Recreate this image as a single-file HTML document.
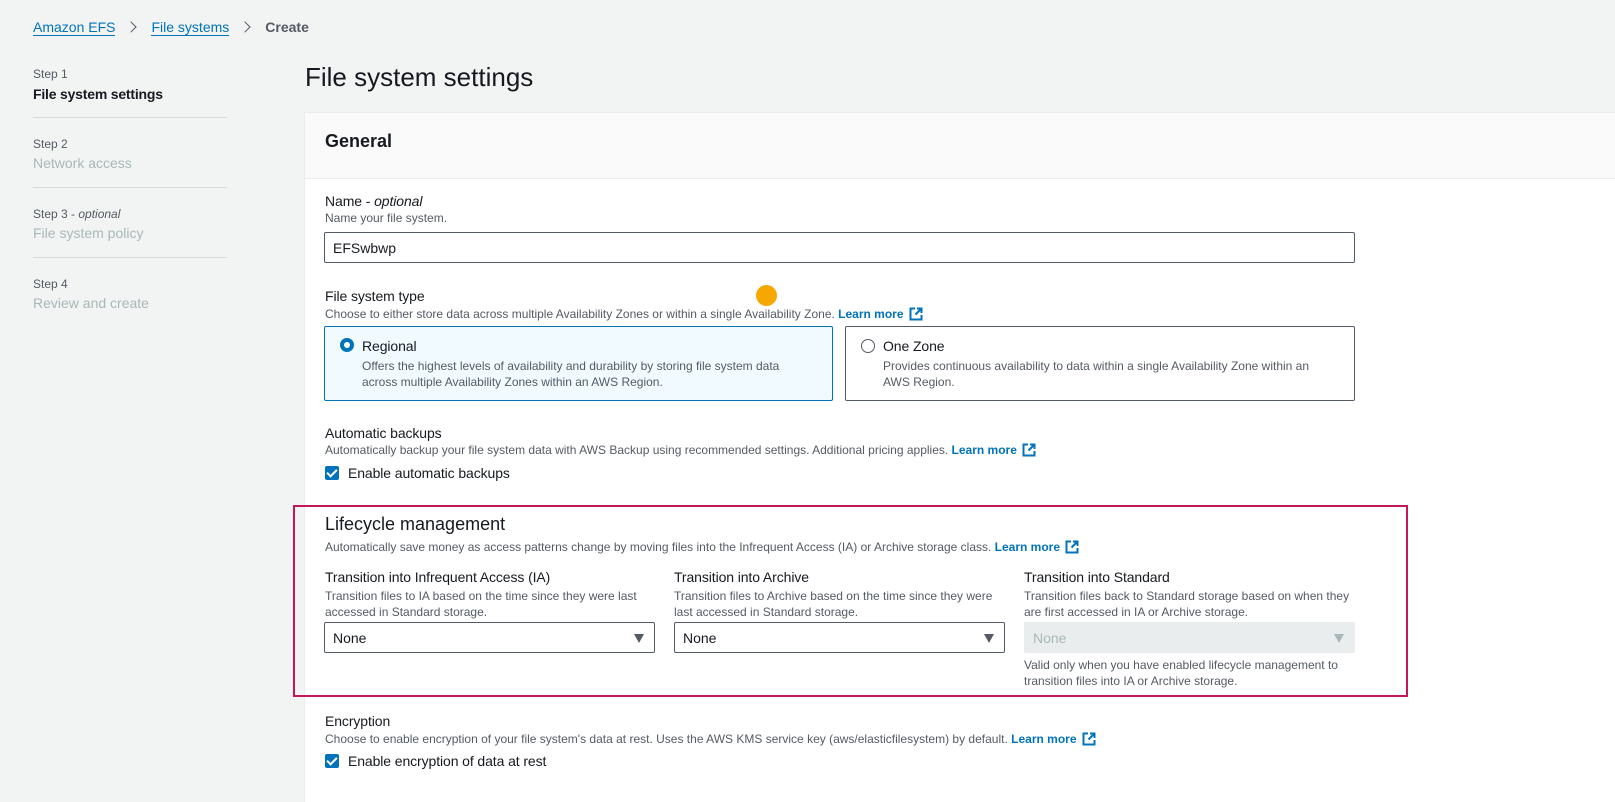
<!DOCTYPE html>
<html><head><meta charset="utf-8"><style>
*{margin:0;padding:0;box-sizing:border-box}
body{width:1615px;height:802px;overflow:hidden;background:#f2f3f3;font-family:"Liberation Sans",sans-serif;color:#16191f;position:relative}
.a{position:absolute;white-space:nowrap}
.s{font-size:12px;color:#545b64;letter-spacing:0}
.l{font-size:14px;color:#16191f;letter-spacing:-0.1px}
.lnk{color:#0073bb;font-weight:bold}
.ext{display:inline-block;width:14px;height:14px;margin-left:5px;vertical-align:-3px}
.sep{position:absolute;left:33px;width:194px;height:1px;background:#d5dbdb}
.step{font-size:12px;color:#545b64}
.sn{font-size:14px;color:#aab7b8}
.sel{position:absolute;height:31px;border:1px solid #545b64;border-radius:2px;background:#fff;font-size:14px;padding:7px 8px}
.tri{position:absolute;right:10px;top:11px;width:0;height:0;border-left:5px solid transparent;border-right:5px solid transparent;border-top:9px solid #545b64}
.cb{position:absolute;width:14px;height:14px;background:#0073bb;border-radius:2px}
.cb:after{content:"";position:absolute;left:4px;top:1px;width:4px;height:8px;border:solid #fff;border-width:0 2px 2px 0;transform:rotate(45deg)}
.chev{display:inline-block;width:8px;height:8px;border-top:1.5px solid #545b64;border-right:1.5px solid #545b64;transform:rotate(45deg);margin:0 16px 1px 12px}
</style></head><body>
<svg width="0" height="0" style="position:absolute"><symbol id="e" viewBox="0 0 14 14"><path d="M6 1.5H1.5v11h11V8" fill="none" stroke="#0073bb" stroke-width="2"/><path d="M8 1.5h4.5V6M12.5 1.5L6.5 7.5" fill="none" stroke="#0073bb" stroke-width="2"/></symbol></svg>
<div class="a" style="left:33px;top:19px;font-size:14px"><span style="color:#0073bb;border-bottom:1px solid #0073bb">Amazon EFS</span><span class="chev"></span><span style="color:#0073bb;border-bottom:1px solid #0073bb">File systems</span><span class="chev"></span><span style="color:#545b64;font-weight:bold">Create</span></div>

<div class="a step" style="left:33px;top:67px">Step 1</div>
<div class="a" style="left:33px;top:86px;font-size:14px;font-weight:bold;letter-spacing:-0.2px">File system settings</div>
<div class="sep" style="top:117px"></div>
<div class="a step" style="left:33px;top:137px">Step 2</div>
<div class="a sn" style="left:33px;top:155px">Network access</div>
<div class="sep" style="top:187px"></div>
<div class="a step" style="left:33px;top:207px">Step 3 - <i>optional</i></div>
<div class="a sn" style="left:33px;top:225px">File system policy</div>
<div class="sep" style="top:257px"></div>
<div class="a step" style="left:33px;top:277px">Step 4</div>
<div class="a sn" style="left:33px;top:295px">Review and create</div>

<div class="a" style="left:305px;top:62px;font-size:26px;color:#16191f">File system settings</div>

<div class="a" style="left:304px;top:112px;width:1311px;height:690px;background:#fff;border-left:1px solid #eaeded;border-top:1px solid #eaeded"></div>
<div class="a" style="left:305px;top:113px;width:1310px;height:66px;background:#fafafa;border-bottom:1px solid #eaeded"></div>
<div class="a" style="left:325px;top:131px;font-size:18px;font-weight:bold">General</div>

<div class="a l" style="left:325px;top:193px">Name - <i>optional</i></div>
<div class="a s" style="left:325px;top:211px">Name your file system.</div>
<div class="a" style="left:324px;top:232px;width:1031px;height:31px;border:1px solid #545b64;border-radius:2px;font-size:14px;padding:7px 8px">EFSwbwp</div>

<div class="a l" style="left:325px;top:288px">File system type</div>
<div class="a s" style="left:325px;top:307px">Choose to either store data across multiple Availability Zones or within a single Availability Zone. <span class="lnk">Learn more</span><svg class="ext"><use href="#e"/></svg></div>
<div class="a" style="left:756px;top:285px;width:21px;height:21px;border-radius:50%;background:#f7a800"></div>
<div class="a" style="left:324px;top:326px;width:509px;height:75px;background:#f1faff;border:1px solid #0073bb;border-radius:2px"></div>
<div class="a" style="left:340px;top:338px;width:14px;height:14px;border-radius:50%;border:4px solid #0073bb;background:#fff"></div>
<div class="a l" style="left:362px;top:338px">Regional</div>
<div class="a s" style="left:362px;top:358px;line-height:16px">Offers the highest levels of availability and durability by storing file system data<br>across multiple Availability Zones within an AWS Region.</div>
<div class="a" style="left:845px;top:326px;width:510px;height:75px;background:#fff;border:1px solid #545b64;border-radius:2px"></div>
<div class="a" style="left:861px;top:339px;width:14px;height:14px;border-radius:50%;border:1.5px solid #545b64"></div>
<div class="a l" style="left:883px;top:338px">One Zone</div>
<div class="a s" style="left:883px;top:358px;line-height:16px">Provides continuous availability to data within a single Availability Zone within an<br>AWS Region.</div>

<div class="a l" style="left:325px;top:425px">Automatic backups</div>
<div class="a s" style="left:325px;top:443px">Automatically backup your file system data with AWS Backup using recommended settings. Additional pricing applies. <span class="lnk">Learn more</span><svg class="ext"><use href="#e"/></svg></div>
<div class="cb" style="left:325px;top:466px"></div>
<div class="a l" style="left:348px;top:465px">Enable automatic backups</div>

<div class="a" style="left:293px;top:505px;width:1115px;height:192px;border:2px solid #c2185b"></div>
<div class="a" style="left:325px;top:514px;font-size:18px">Lifecycle management</div>
<div class="a s" style="left:325px;top:540px">Automatically save money as access patterns change by moving files into the Infrequent Access (IA) or Archive storage class. <span class="lnk">Learn more</span><svg class="ext"><use href="#e"/></svg></div>

<div class="a l" style="left:325px;top:569px">Transition into Infrequent Access (IA)</div>
<div class="a s" style="left:325px;top:588px;line-height:16px">Transition files to IA based on the time since they were last<br>accessed in Standard storage.</div>
<div class="sel" style="left:324px;top:622px;width:331px">None<span class="tri"></span></div>

<div class="a l" style="left:674px;top:569px">Transition into Archive</div>
<div class="a s" style="left:674px;top:588px;line-height:16px">Transition files to Archive based on the time since they were<br>last accessed in Standard storage.</div>
<div class="sel" style="left:674px;top:622px;width:331px">None<span class="tri"></span></div>

<div class="a l" style="left:1024px;top:569px">Transition into Standard</div>
<div class="a s" style="left:1024px;top:588px;line-height:16px">Transition files back to Standard storage based on when they<br>are first accessed in IA or Archive storage.</div>
<div class="sel" style="left:1024px;top:622px;width:331px;background:#eaeded;border-color:#eaeded;color:#aab7b8">None<span class="tri" style="border-top-color:#aab7b8"></span></div>
<div class="a s" style="left:1024px;top:657px;line-height:16px">Valid only when you have enabled lifecycle management to<br>transition files into IA or Archive storage.</div>

<div class="a l" style="left:325px;top:713px">Encryption</div>
<div class="a s" style="left:325px;top:732px">Choose to enable encryption of your file system's data at rest. Uses the AWS KMS service key (aws/elasticfilesystem) by default. <span class="lnk">Learn more</span><svg class="ext"><use href="#e"/></svg></div>
<div class="cb" style="left:325px;top:754px"></div>
<div class="a l" style="left:348px;top:753px">Enable encryption of data at rest</div>
</body></html>
